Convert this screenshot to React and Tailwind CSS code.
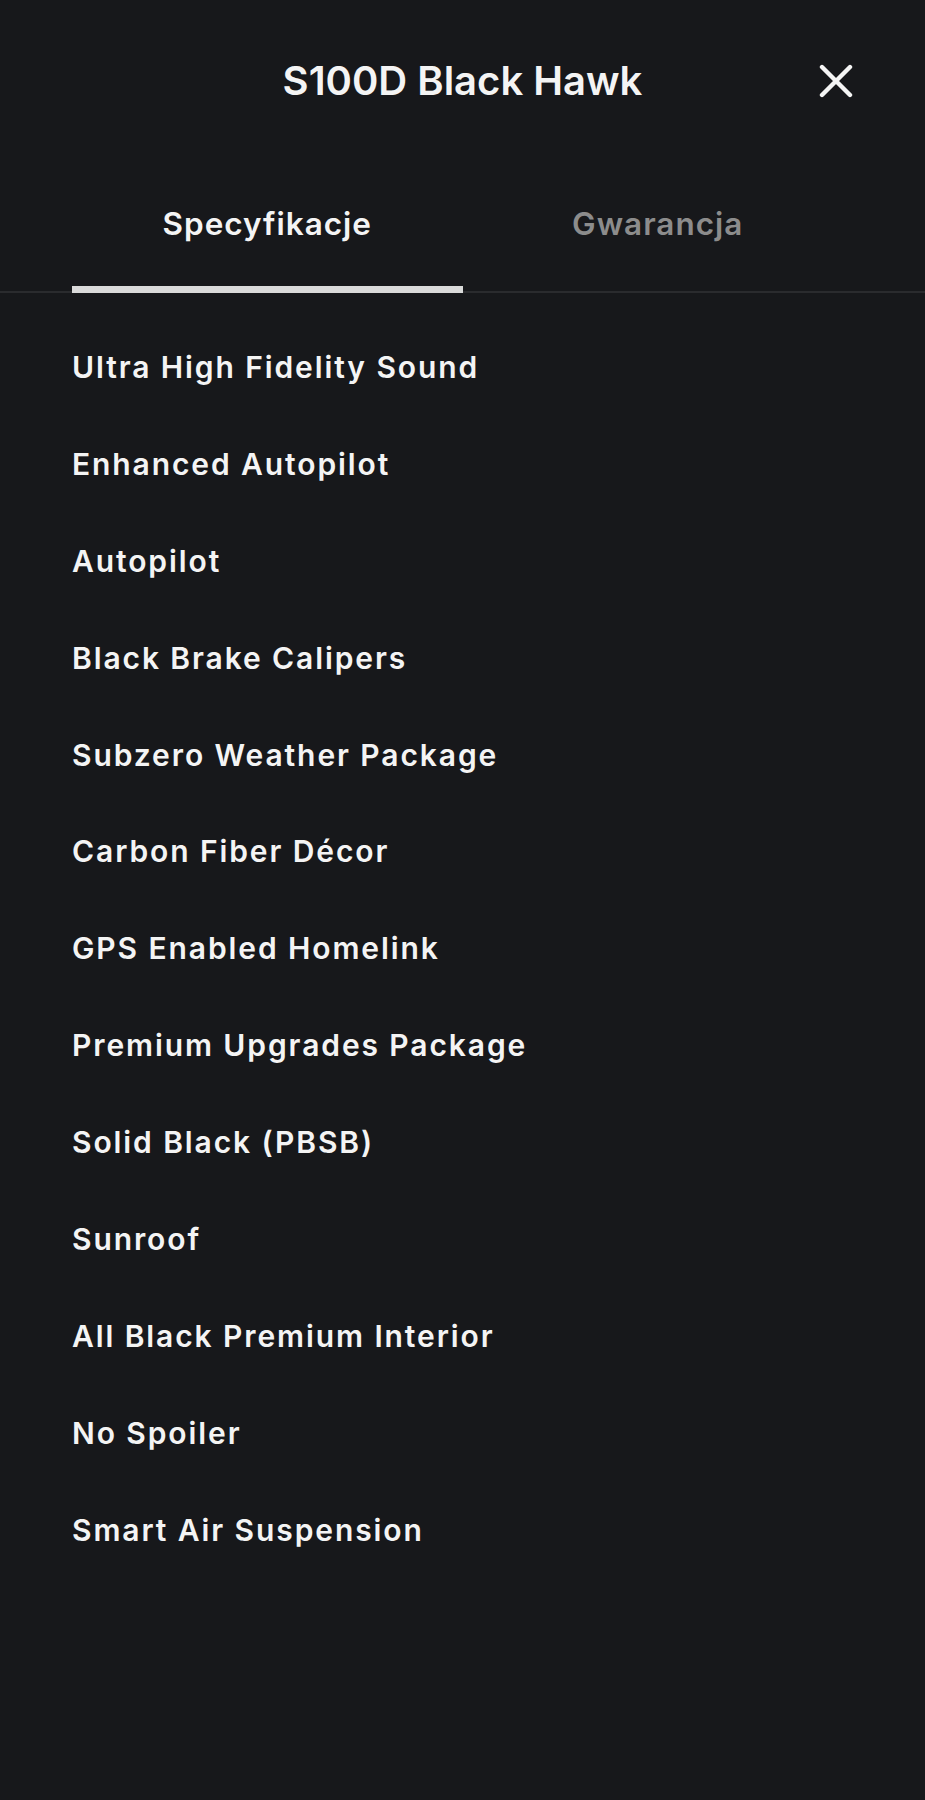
import { useState } from 'react';

const TAB_SPECS = 'specs';
const TAB_WARRANTY = 'warranty';

const FEATURES = [
  'Ultra High Fidelity Sound',
  'Enhanced Autopilot',
  'Autopilot',
  'Black Brake Calipers',
  'Subzero Weather Package',
  'Carbon Fiber Décor',
  'GPS Enabled Homelink',
  'Premium Upgrades Package',
  'Solid Black (PBSB)',
  'Sunroof',
  'All Black Premium Interior',
  'No Spoiler',
  'Smart Air Suspension',
];

function CloseIcon() {
  return (
    <svg width="34" height="34" viewBox="0 0 34 34" fill="none" aria-hidden="true">
      <path d="M3 3L31 31M31 3L3 31" stroke="#f5f5f5" strokeWidth="4.4" strokeLinecap="round" />
    </svg>
  );
}

export default function App() {
  const [tab, setTab] = useState(TAB_SPECS);

  return (
    <div
      className="min-h-[1800px] w-full bg-[#17181b] text-[#f4f4f4]"
      style={{ fontFamily: 'Inter, "Noto Sans", "Liberation Sans", sans-serif' }}
    >
      <header className="grid h-[159px] grid-cols-[1fr_auto_1fr] items-center px-[72px] pt-[3px]">
        <div />
        <h1 className="text-[40px] font-semibold">S100D Black Hawk</h1>
        <button type="button" aria-label="Zamknij" className="justify-self-end">
          <CloseIcon />
        </button>
      </header>

      <nav className="flex h-[134px] items-stretch border-b-2 border-[#2a2b2e] px-[72px]">
        <button
          type="button"
          onClick={() => setTab(TAB_SPECS)}
          className={`-mb-[2px] flex flex-1 items-center justify-center border-b-[7px] pt-[2px] text-[31.5px] font-semibold tracking-[1px] ${
            tab === TAB_SPECS ? 'border-[#dadada] text-[#f4f4f4]' : 'border-transparent text-[#8c8c8c]'
          }`}
        >
          Specyfikacje
        </button>
        <button
          type="button"
          onClick={() => setTab(TAB_WARRANTY)}
          className={`-mb-[2px] flex flex-1 items-center justify-center border-b-[7px] pt-[2px] text-[31.5px] font-semibold tracking-[1px] ${
            tab === TAB_WARRANTY ? 'border-[#dadada] text-[#f4f4f4]' : 'border-transparent text-[#8c8c8c]'
          }`}
        >
          Gwarancja
        </button>
      </nav>

      <ul className="px-[72px] pt-[26px]">
        {FEATURES.map((item) => (
          <li key={item} className="flex h-[96.9px] items-center text-[30px] font-semibold tracking-[1.9px]">
            {item}
          </li>
        ))}
      </ul>
    </div>
  );
}
